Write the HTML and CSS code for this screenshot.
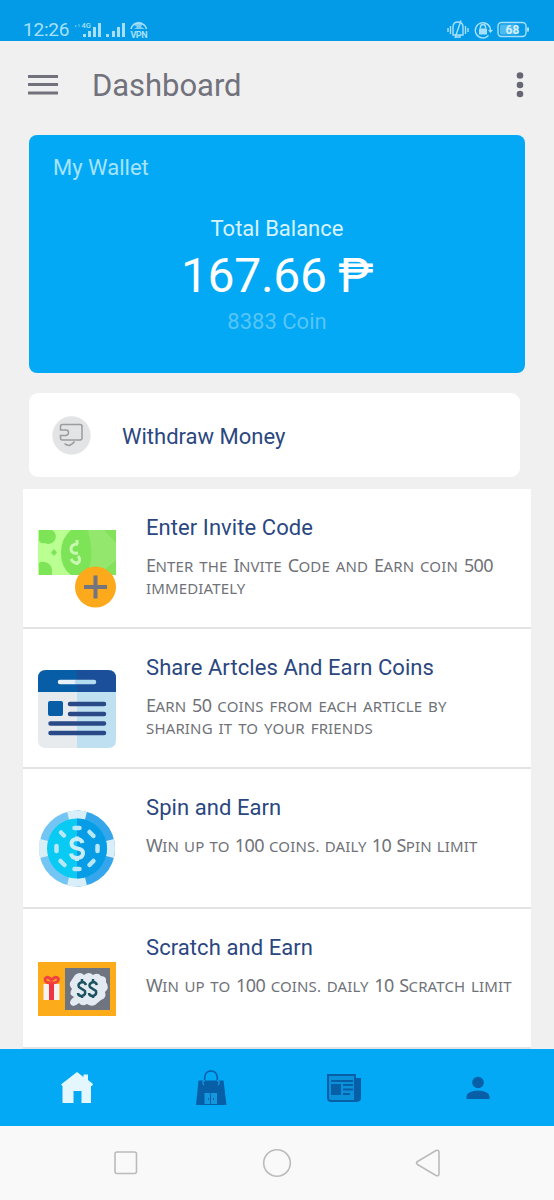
FILE: index.html
```html
<!DOCTYPE html>
<html lang="en">
<head>
<meta charset="utf-8">
<title>Dashboard</title>
<link rel="stylesheet" href="styles.css">
</head>
<body>
<div class="screen">
  <div class="status">
    <span class="clock">12:26</span>
    <svg class="signals" width="74" height="22" viewBox="0 0 74 22">
      <g fill="#a8e0fb">
        <path d="M0 5h1.300v2H0zM3.500 4h1v3h-1z" opacity=".6"/>
        <rect x="8" y="14" width="3" height="3"/><rect x="13" y="11" width="3" height="6"/><rect x="18" y="7" width="3" height="10"/><rect x="23" y="3" width="3" height="14"/>
        <rect x="31" y="14" width="3" height="3"/><rect x="37" y="11" width="3" height="6"/><rect x="42" y="7" width="3" height="10"/><rect x="47" y="3" width="3" height="14"/>
      </g>
      <text x="6.500" y="8" class="tiny">4G</text>
      <path d="M56 9a8 7.500 0 0 1 15.500 0" fill="none" stroke="#a8e0fb" stroke-width="1.500"/>
      <path d="M58 4q5-4 10-1l-2 4 4 2H59l3-2z" fill="#a8e0fb" opacity=".75"/>
      <text x="55.500" y="17.500" class="vpn" textLength="17">VPN</text>
    </svg>
    <svg class="indicators" width="84" height="22" viewBox="0 0 84 22" fill="none" stroke="#a8e0fb" stroke-width="1.400">
      <path d="M1 10v4M3.500 8v8M18.500 8v8M21 10v4M6 17V9q0-5 5-5t5 5v8zM8 20L14 2.500M9 17v2h4v-2"/>
      <path d="M41.500 17.500A7.600 7.600 0 1 1 43.500 13"/><path d="M41 12h5l-2.500 3z" fill="#a8e0fb" stroke="none"/>
      <rect x="32" y="10.500" width="8" height="6" fill="#a8e0fb" stroke="none"/><path d="M33.500 10.500V9a2.500 2.500 0 0 1 5 0v1.500"/>
      <rect x="51" y="4.500" width="28" height="14" rx="3.500"/><rect x="53" y="6.500" width="17" height="10" rx="1" fill="#a8e0fb" opacity=".45" stroke="none"/><path d="M81 9.500v4" stroke-width="2"/>
      <text x="58.500" y="16" class="charge" textLength="14">68</text>
    </svg>
  </div>

  <header class="toolbar">
    <svg width="30" height="24" viewBox="0 0 30 24" fill="#72727c"><rect y="2" width="30" height="3"/><rect y="10" width="30" height="3"/><rect y="18.500" width="30" height="3"/></svg>
    <h1>Dashboard</h1>
    <svg width="8" height="28" viewBox="0 0 8 28" fill="#666772"><circle cx="4" cy="4.500" r="3.300"/><circle cx="4" cy="14" r="3.300"/><circle cx="4" cy="23" r="3.300"/></svg>
  </header>

  <section class="wallet">
    <div class="wallet-name"><span>My Wallet</span></div>
    <div class="label"><span>Total Balance</span></div>
    <div class="balance"><span>167.66 ₱</span></div>
    <div class="coins"><span>8383 Coin</span></div>
  </section>

  <section class="withdraw">
    <svg width="39" height="39" viewBox="0 0 39 39">
      <circle cx="19.500" cy="19.500" r="19.200" fill="#e2e4e5"/>
      <path d="M8.500 14V10.500q0-2 2-2H28q2 0 2 2V22q0 2-2 2H10.500q-2 0-2-2v-2.500H14q2.500-.5 2.500-3t-2.500-2.500zM12.500 27.500q2 2 5 2 3.500-1.500 5-4" fill="none" stroke="#999ca0" stroke-width="1.500"/>
    </svg>
    <span class="withdraw-text">Withdraw Money</span>
  </section>

  <main class="list">
    <article class="row">
      <svg class="art" width="78" height="78" viewBox="0 0 78 78">
        <path fill="#b9ff91" d="M0 0h78v45H0z"/><path fill="#82e35b" d="M39 0h39v45H39z"/>
        <g fill="#7de357"><path d="M1 0h13a7 7 0 0 1-7 13q-4 1-6-2zM1 45V33q3-2 6-1 7 2 7 9v4z"/><path d="M16 19l3 3.500-3 3.500-3-3.500z"/><path d="M33 0h12q10 8 10 23T45 45H33Q23 38 23 23T33 0z"/></g>
        <path d="M50 0h16l12 13v17L63 43 51 38q5-16-1-38z" fill="#9bea76" opacity=".65"/>
        <path d="M40 14q-7 0-7 5t7 4M40 26q4 5-1 7-4 0-6-4M39 10v4M39 32v3" fill="none" stroke="#c7f9b1" stroke-width="3"/>
        <circle cx="57.500" cy="57" r="20.500" fill="#fca91b"/><path d="M57.500 45.500v23M46 57h23" stroke="#727480" stroke-width="4"/>
      </svg>
      <div class="copy"><h2>Enter Invite Code</h2>
        <p><span class="spread"><b>E</b>nter the <b>I</b>nvite <b>C</b>ode and <b>E</b>arn coin <b>500</b></span> <span>immediately</span></p></div>
    </article>
    <article class="row">
      <svg class="art" width="78" height="78" viewBox="0 0 78 78">
        <path d="M39 0H8Q0 0 0 8v62q0 8 8 8h31z" fill="#e7ebee"/><path d="M39 0h31q8 0 8 8v62q0 8-8 8H39z" fill="#bfe0f0"/>
        <path d="M0 22V8Q0 0 8 0h31v22z" fill="#075da6"/><path d="M39 0h31q8 0 8 8v14H39z" fill="#1c4f9a"/>
        <path d="M22 12h16" stroke="#e8f1f8" stroke-width="4.500" stroke-linecap="round"/><path d="M39 12h17" stroke="#b4dcf0" stroke-width="4.500" stroke-linecap="round"/>
        <rect x="10" y="31" width="15" height="15" rx="2" fill="#075da6"/>
        <path d="M32 34h34M32 44h34M12.500 53.500H66M12.500 63H66" stroke="#2a4987" stroke-width="4.500" stroke-linecap="round"/>
      </svg>
      <div class="copy"><h2>Share Artcles And Earn Coins</h2>
        <p><span class="spread"><b>E</b>arn <b>50</b> coins from each article by</span> <span class="spread">sharing it to your friends</span></p></div>
    </article>
    <article class="row">
      <svg class="art" width="78" height="78" viewBox="0 0 78 78">
        <circle cx="39" cy="38.500" r="38" fill="#73c6f4"/><path d="M39 .5a38 38 0 0 1 0 76z" fill="#36a6ec"/>
        <g fill="#d8eef8"><path d="M29 1.500q10-2 20 0l-3 12H32zM29 75.500q10 2 20 0l-3-12H32zM2 48q-2-10 0-19l12 3v13zM76 48q2-10 0-19l-12 3v13z"/></g>
        <circle cx="39" cy="38.500" r="30" fill="#08caf2"/><path d="M39 8.500a30 30 0 0 1 0 60z" fill="#079ce6"/>
        <g stroke="#b8e8f8" stroke-width="4.500" stroke-linecap="round"><path d="M36.500 18h5M36.500 59h5M18.500 36v5M59.500 36v5M23 22.500l3 3M51.500 22l4 4M22.500 51l4 4M51.500 55l4-4"/></g>
        <path d="M44.500 33q-1-4-6-4-5 .5-5 4.500t6 5 5.500 5q-.5 4.500-6 4.500t-6-4.500M39 26.500v4M39 47v4" fill="none" stroke="#c9edf8" stroke-width="4"/>
      </svg>
      <div class="copy"><h2>Spin and Earn</h2>
        <p><span class="tight"><b>W</b>in up to <b>100</b> coins. daily <b>10 S</b>pin limit</span></p></div>
    </article>
    <article class="row">
      <svg class="art" width="78" height="78" viewBox="0 0 78 78">
        <path fill="#fcab1b" d="M0 12h78v54H0z"/><path fill="#6e7480" d="M27 18h45v42H27z"/>
        <path d="M37 25q5-4 9 0 5-4 9 0 5-3 8 1 6 0 5 6 4 6-1 10 2 6-4 8l-6 5q-4 2-8-1-5 3-8-1-7 6-9 0 0-3 4-6-6-3-2-8-4-5-1-8z" fill="#e4eaf1"/>
        <path d="M5.500 34h16v16h-16z" fill="#f4f3ef"/><path d="M11 33h5v17h-5z" fill="#ed3346"/>
        <path d="M13.500 33q-7 0-6.500-4 2-4 6.500 1 4.500-5 7-1 0 4-7 4z" fill="none" stroke="#f34040" stroke-width="2.800"/>
        <g fill="none" stroke="#1b5360" stroke-width="2.500"><path d="M48 35q-1-3-4-3-5 2-3 5 3 2 6 4 1 4-3 5-4 0-4-3M44 29v4M44 45v3"/><path d="M59 35q-1-3-4-3-5 2-3 5 3 2 6 4 1 4-3 5-4 0-4-3M55 29v4M55 45v3"/></g>
      </svg>
      <div class="copy"><h2>Scratch and Earn</h2>
        <p><span class="medium"><b>W</b>in up to <b>100</b> coins. daily <b>10 S</b>cratch limit</span></p></div>
    </article>
  </main>

  <nav class="tabs">
    <svg width="34" height="34" viewBox="0 0 34 34"><path d="M1 13.500L17 1l6.500 5V3.500H28V9l5 4-1 2h-1v17H21.500V20h-8v12H2.500V15z" fill="#e4f6fe"/></svg>
    <svg width="34" height="36" viewBox="0 0 34 36"><path d="M4.500 10.500h25l3 24.500H2z" fill="#075fa8"/><path d="M11 14q-2-13 6-13t6 13" fill="none" stroke="#075fa8" stroke-width="1.600"/><path d="M11 10.500q-4 1-1 4.500M23 10.500q4 1 1 4.500" fill="none" stroke="#1698dc" stroke-width="1.300"/><path d="M10.500 23h5.500v11h-5.500zM17 23h6v11h-6z" fill="#1298df"/><path d="M14 28h1v2h-1zM19 28h1v2h-1z" fill="#075fa8"/></svg>
    <svg width="36" height="32" viewBox="0 0 36 32"><path d="M2 3h27v26H5q-3 0-3-3z" fill="#0b91d9" stroke="#075fa8" stroke-width="2"/><path d="M30 6h5v20q0 4-5 4z" fill="#075fa8"/><path d="M5 9h22M17 13h10M17 17.500h10M17 22h7" stroke="#075fa8" stroke-width="2"/><path d="M5 12h10v11H5z" fill="#075fa8"/></svg>
    <svg width="24" height="26" viewBox="0 0 24 26" fill="#075fa8"><circle cx="12" cy="7.500" r="5.800"/><path d="M.5 24v-3q1-5 11.500-5.500Q22.500 16 23.500 21v3z"/></svg>
  </nav>

  <footer class="system">
    <svg width="24" height="24" viewBox="0 0 24 24"><rect x="1" y="1" width="21.500" height="21.500" rx="2"/></svg>
    <svg width="30" height="30" viewBox="0 0 30 30"><circle cx="15" cy="15" r="13.300"/></svg>
    <svg width="26" height="28" viewBox="0 0 26 28"><path d="M2.500 12.500L21 1.500q3-1 3 2v21q0 3-3 2L2.500 15.500q-2-1.500 0-3z"/></svg>
  </footer>
</div>
</body>
</html>
```
FILE: styles.css
```css
* { box-sizing: border-box; }
body { margin: 0; font-family: Roboto, "Noto Sans", sans-serif; background: #f0f0f0; }
h1, h2, p { margin: 0; font-weight: 400; }
svg { display: block; flex: none; }
.screen { width: 554px; height: 1200px; display: flex; flex-direction: column; overflow: hidden; }

.status { height: 41px; flex: none; background: #039be7; display: flex; align-items: flex-end; padding: 0 23px 0 23px; color: #a8e0fb; }
.clock { font-size: 19px; line-height: 22px; width: 52px; letter-spacing: -.2px; }
.signals { margin-bottom: -1px; }
.indicators { margin-left: auto; margin-bottom: 1px; }
.tiny { font-size: 7.5px; font-weight: 500; fill: #a8e0fb; }
.vpn { font-size: 9px; font-weight: 700; fill: #a8e0fb; }
.charge { font-size: 12px; font-weight: 700; fill: #d3f1fd; stroke: none; }

.toolbar { height: 94px; flex: none; display: flex; align-items: center; padding: 0 30px 6px 28px; }
.toolbar h1 { flex: 1; margin-left: 34px; padding-top: 2px; font-size: 31px; line-height: 40px; letter-spacing: -.05px; color: #72727c; }

.wallet { width: 496px; height: 238px; flex: none; margin-left: 29px; padding: 19px 24px; border-radius: 8px; background: #04a9f5; color: #fff; }
.wallet-name { font-size: 22px; line-height: 28px; color: #a6e4ff; }
.label { margin-top: 33px; font-size: 22px; line-height: 28px; text-align: center; color: #d7f3ff; }
.balance { font-size: 48px; line-height: 66px; letter-spacing: -.3px; text-align: center; }
.coins { font-size: 22px; line-height: 26px; text-align: center; color: #56c5f8; }

.withdraw { width: 491px; height: 84px; flex: none; margin: 20px 0 12px 29px; padding-left: 23px; display: flex; align-items: center; gap: 31px; background: #fff; border-radius: 9px; font-size: 22px; color: #2b4780; }
.withdraw-text { padding-top: 2px; }

.list { width: 508px; height: 560px; flex: none; margin-left: 23px; background: #fff; overflow: hidden; }
.row { height: 140px; display: flex; padding: 25px 0 0 15px; gap: 30px; border-bottom: 2px solid #e3e3e3; }
.art { margin-top: 16px; }
.row h2 { font-size: 22px; line-height: 28px; letter-spacing: .07px; color: #2b4780; white-space: nowrap; }
.row p { margin-top: 12px; font-family: "Noto Sans", sans-serif; font-size: 15px; line-height: 23px; letter-spacing: .15px; text-transform: uppercase; color: #707278; }
.row p span { display: block; width: max-content; height: 23px; white-space: nowrap; }
.row b { font-size: 18px; font-weight: 400; letter-spacing: -.6px; }
.spread { word-spacing: 1.8px; }
.medium { word-spacing: 1.5px; }
.tight { word-spacing: 1.1px; }

.tabs { height: 77px; flex: none; display: grid; grid-template-columns: 154px 113px 154px 113px; justify-items: center; align-items: center; background: #04a9f5; }
.system { flex: 1; display: grid; grid-template-columns: repeat(3, 151px); justify-content: center; justify-items: center; align-items: center; background: #f9f9f9; }
.system svg { fill: none; stroke: #bbb; stroke-width: 1.6; }
```
